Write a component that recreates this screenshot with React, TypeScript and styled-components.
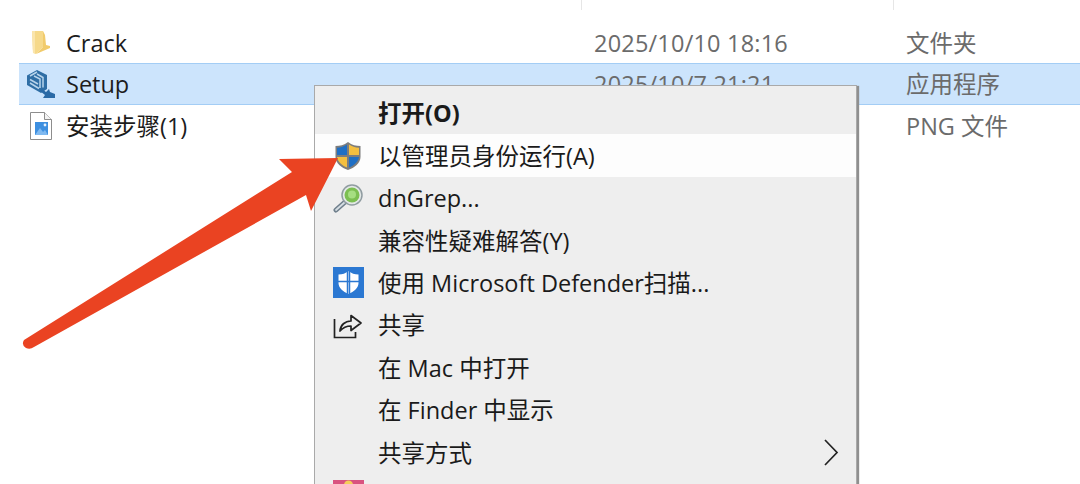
import React from "react";
import styled, { createGlobalStyle } from "styled-components";

const FONT = `"Open Sans", "Noto Sans CJK SC", "Noto Sans", sans-serif`;

const Global = createGlobalStyle`
  html, body {
    margin: 0;
    padding: 0;
    background: #fff;
  }
`;

const Page = styled.div`
  position: relative;
  width: 1080px;
  height: 484px;
  overflow: hidden;
  background: #fff;
  font-family: ${FONT};
  font-size: 23.5px;
  line-height: 32px;
`;

const HeaderStrip = styled.div`
  display: grid;
  grid-template-columns: 582px 312px 1fr;
  height: 21.5px;
`;

const HeaderCell = styled.div`
  height: 10px;
  border-right: 1px solid #e6e6e6;
  &:last-child {
    border-right: none;
  }
`;

const FileList = styled.div`
  display: flex;
  flex-direction: column;
  padding-left: 19px;
`;

const FileRow = styled.div<{ $selected?: boolean }>`
  display: grid;
  grid-template-columns: 47px 528px 312px 1fr;
  align-items: center;
  box-sizing: border-box;
  height: 41.5px;
  padding-top: 1px;
  background: ${(p) => (p.$selected ? "#cce4fc" : "transparent")};
  border-top: 1px solid ${(p) => (p.$selected ? "#a3cdf5" : "transparent")};
  border-bottom: 1px solid ${(p) => (p.$selected ? "#a3cdf5" : "transparent")};
`;

const FileIcon = styled.div`
  display: flex;
  justify-content: center;
  padding-right: 4px;
`;

const FileName = styled.span`
  color: #1c1c1c;
  white-space: nowrap;
`;

const FileMeta = styled.span`
  color: #6b6b6b;
  white-space: nowrap;
`;

const FileDate = styled(FileMeta)`
  letter-spacing: 0.2px;
`;

const Menu = styled.div`
  position: absolute;
  left: 314px;
  top: 85px;
  width: 541px;
  padding: 6px 0 0;
  background: #eeeeee;
  border: 1px solid #a9a9a9;
  border-bottom: none;
  box-shadow: 2px 1px 1px #8f8f8f;
`;

const MenuItem = styled.div<{ $active?: boolean; $bold?: boolean }>`
  display: grid;
  grid-template-columns: 63px 1fr 33px;
  align-items: center;
  height: 42.45px;
  background: ${(p) => (p.$active ? "#fdfdfd" : "transparent")};
  color: #1a1a1a;
  font-weight: ${(p) => (p.$bold ? 700 : 400)};
`;

const MenuIcon = styled.div`
  display: flex;
  justify-content: center;
  align-items: center;
  padding-left: 3px;
`;

const MenuLabel = styled.span`
  white-space: nowrap;
`;

const Arrow = styled.svg`
  position: absolute;
  left: 0;
  top: 0;
  pointer-events: none;
`;

const FolderIcon = () => (
  <svg width="18" height="25" viewBox="0 0 18 25">
    <path d="M0 1h11v16l-7 7-3-1z" fill="#f6d98a" />
    <path d="M11 1l2 4 1 10 4 1v2l-14 6 7-7z" fill="#f1cb6c" />
    <path d="M0 1h3v22H1z" fill="#fae5ad" />
  </svg>
);

const SetupIcon = () => (
  <svg width="30" height="30" viewBox="0 0 30 30">
    <path d="M1 6.500L11 1l10 5v14l-6 4L1 16z" fill="#2f6ea5" />
    <path
      d="M4 7l7-4M4 10.500l8 4.500M4 14l9 5.500M8 7l6 3v9M11 5l6 3.500v10"
      stroke="#b7d3ea"
      strokeWidth="1.500"
      fill="none"
    />
    <path d="M14 22l2-2 4 3 3-3 1 3 5 2v4H17l2-3z" fill="#2a6aa6" />
  </svg>
);

const ImageFileIcon = () => (
  <svg width="22" height="28" viewBox="0 0 22 28">
    <path d="M.5.5h14l7 7v20H.5z" fill="#fff" stroke="#8d8d8d" />
    <path d="M14.500.5v7h7" fill="#f3f3f3" stroke="#8d8d8d" />
    <rect x="5" y="10" width="13" height="13" fill="#3d8fe0" />
    <path d="M5 23l5-7 3 4 2-2 3 5z" fill="#7fb9f0" />
    <circle cx="15" cy="13" r="1.400" fill="#e5f1fc" />
  </svg>
);

const UacIcon = () => (
  <svg width="28" height="30" viewBox="0 0 28 30">
    <path d="M14 1C10 4 6 5 1.500 5v11c0 6 6 11 12.500 13 6.500-2 12.500-7 12.500-13V5C22 5 18 4 14 1z" fill="#7d7d7d" />
    <path d="M13 3.500C10 5.500 7 6.500 3 6.800V14h10z" fill="#1f6fc4" />
    <path d="M15 3.500c3 2 6 3 10 3.300V14H15z" fill="#f4bf3f" />
    <path d="M3 16c.5 4.500 5 8.500 10 10.500V16z" fill="#f4bf3f" />
    <path d="M15 16v10.500c5-2 9.500-6 10-10.500z" fill="#1f6fc4" />
  </svg>
);

const SearchIcon = () => (
  <svg width="31" height="29" viewBox="0 0 31 29">
    <path d="M3 26l9-8" stroke="#6f7f8c" strokeWidth="5" strokeLinecap="round" />
    <path d="M3 26l9-8" stroke="#d5dde3" strokeWidth="1.800" strokeLinecap="round" />
    <circle cx="19" cy="11" r="10" fill="#e3e8e6" stroke="#909ca1" strokeWidth="1.500" />
    <circle cx="19" cy="11" r="7.500" fill="#7cbf52" />
    <circle cx="19" cy="10.500" r="4" fill="#a6de82" />
  </svg>
);

const DefenderIcon = () => (
  <svg width="31" height="31" viewBox="0 0 31 31">
    <rect width="31" height="31" fill="#2b78d2" />
    <path d="M15.500 4c-3 2.500-6 3.500-10 3.500V16c0 5 4.500 8.500 10 11 5.500-2.500 10-6 10-11V7.500c-4 0-7-1-10-3.500z" fill="#fff" />
    <path d="M14.500 4v23M16.500 4v23M5 14.500h21" stroke="#2b78d2" strokeWidth="1.500" />
  </svg>
);

const ShareIcon = () => (
  <svg width="30" height="28" viewBox="0 0 30 28" fill="none" stroke="#222" strokeWidth="1.700">
    <path d="M1.500 8v18.500h21V21" />
    <path d="M7 20c.5-6 5-10 11-10V4.500L28 12l-10 7.500V15c-4 0-8 1.500-11 5z" strokeLinejoin="round" />
  </svg>
);

const Chevron = () => (
  <svg width="16" height="27" viewBox="0 0 16 27" fill="none" stroke="#222" strokeWidth="1.700">
    <path d="M2 1l12 12.500L2 26" />
  </svg>
);

const PartialIcon = () => (
  <svg width="31" height="31" viewBox="0 0 31 31">
    <rect width="31" height="31" fill="#d9527f" />
    <circle cx="15.500" cy="5" r="4.500" fill="#f4cf5a" />
  </svg>
);

const files = [
  { name: "Crack", date: "2025/10/10 18:16", type: "文件夹", icon: <FolderIcon /> },
  { name: "Setup", date: "2025/10/7 21:21", type: "应用程序", icon: <SetupIcon />, selected: true },
  { name: "安装步骤(1)", date: "", type: "PNG 文件", icon: <ImageFileIcon /> },
];

const menuItems: {
  label: string;
  icon?: React.ReactNode;
  bold?: boolean;
  active?: boolean;
  more?: boolean;
}[] = [
  { label: "打开(O)", bold: true },
  { label: "以管理员身份运行(A)", icon: <UacIcon />, active: true },
  { label: "dnGrep...", icon: <SearchIcon /> },
  { label: "兼容性疑难解答(Y)" },
  { label: "使用 Microsoft Defender扫描...", icon: <DefenderIcon /> },
  { label: "共享", icon: <ShareIcon /> },
  { label: "在 Mac 中打开" },
  { label: "在 Finder 中显示" },
  { label: "共享方式", more: true },
  { label: "", icon: <PartialIcon /> },
];

export default function App() {
  return (
    <Page>
      <Global />
      <HeaderStrip>
        <HeaderCell />
        <HeaderCell />
        <HeaderCell />
      </HeaderStrip>
      <FileList>
        {files.map((f) => (
          <FileRow key={f.name} $selected={f.selected}>
            <FileIcon>{f.icon}</FileIcon>
            <FileName>{f.name}</FileName>
            <FileDate>{f.date}</FileDate>
            <FileMeta>{f.type}</FileMeta>
          </FileRow>
        ))}
      </FileList>
      <Menu>
        {menuItems.map((m, i) => (
          <MenuItem key={i} $active={m.active} $bold={m.bold}>
            <MenuIcon>{m.icon}</MenuIcon>
            <MenuLabel>{m.label}</MenuLabel>
            {m.more && <Chevron />}
          </MenuItem>
        ))}
      </Menu>
      <Arrow width="1080" height="484" viewBox="0 0 1080 484">
        <path
          d="M338 158L279 159L292 172L24 340Q21 345 26 348Q30 350 34 347L306 195L311 211Z"
          fill="#ea4322"
        />
      </Arrow>
    </Page>
  );
}
